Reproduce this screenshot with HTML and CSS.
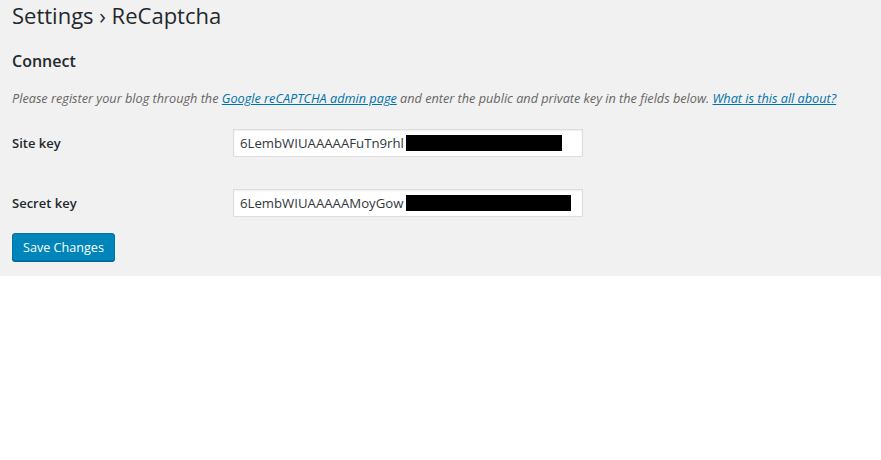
FILE: index.html
```html
<!DOCTYPE html>
<html>
<head>
<meta charset="utf-8">
<link rel="stylesheet" href="styles.css">
</head>
<body>
<div class="wrap">
  <h1 class="title">Settings › ReCaptcha</h1>
  <h2 class="section">Connect</h2>
  <p class="desc">Please register your blog through the <a href="#">Google reCAPTCHA admin page</a> and enter the public and private key in the fields below. <a href="#">What is this all about?</a></p>
  <div class="form">
    <div class="row">
      <label class="label">Site key</label>
      <div class="field"><span class="val">6LembWIUAAAAAFuTn9rhl</span><span class="redact r1"></span></div>
    </div>
    <div class="row">
      <label class="label">Secret key</label>
      <div class="field"><span class="val">6LembWIUAAAAAMoyGow</span><span class="redact r2"></span></div>
    </div>
  </div>
  <button class="btn">Save Changes</button>
</div>
</body>
</html>
```
FILE: styles.css
```css
html, body { margin: 0; padding: 0; background: #fff; }
body { font-family: "Open Sans", "Noto Sans", sans-serif; color: #23282d; }
.wrap {
  background: #f1f1f1;
  height: 276px;
  box-sizing: border-box;
  padding: 1px 12px 0;
}
.title {
  margin: 0;
  font-size: 22px;
  font-weight: 400;
  line-height: 29px;
  color: #23282d;
}
.section {
  margin: 19px 0 0;
  font-size: 16px;
  font-weight: 600;
  line-height: 24px;
  color: #23282d;
}
.desc {
  margin: 15px 0 0;
  font-size: 12.7px;
  font-style: italic;
  line-height: 20px;
  color: #666;
}
.desc a { color: #0073aa; text-decoration: underline; }
.form { margin-top: 21px; }
.row {
  display: flex;
  align-items: center;
  height: 28px;
  margin-bottom: 32px;
}
.row:last-child { margin-bottom: 16px; }
.label {
  width: 221px;
  font-size: 13px;
  font-weight: 600;
  color: #23282d;
}
.field {
  position: relative;
  width: 350px;
  height: 28px;
  box-sizing: border-box;
  background: #fff;
  border: 1px solid #ddd;
  box-shadow: inset 0 1px 2px rgba(0,0,0,.07);
  padding: 0 6px;
  display: flex;
  align-items: center;
  font-size: 13.2px;
  color: #32373c;
}
.redact {
  position: absolute;
  top: 5px;
  height: 16px;
  background: #000;
  left: 172px;
}
.r1 { width: 156px; }
.r2 { width: 165px; }
.btn {
  display: block;
  width: 103px;
  height: 28px;
  padding: 0;
  font-family: "Open Sans", "Noto Sans", sans-serif;
  font-size: 12.6px;
  color: #fff;
  background: #0085ba;
  border: 1px solid #0073aa;
  border-radius: 3px;
  box-shadow: 0 1px 0 #006799;
  cursor: pointer;
}
```
